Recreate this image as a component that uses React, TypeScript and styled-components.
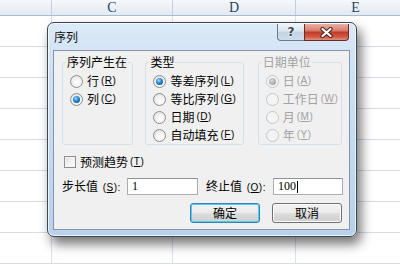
import styled, { createGlobalStyle } from 'styled-components'

const Global = createGlobalStyle`
	html, body {
		margin: 0;
		padding: 0;
	}
	body {
		width: 400px;
		height: 266px;
		overflow: hidden;
		background: #fff;
		font-family: "Noto Sans CJK SC", "DejaVu Sans", sans-serif;
	}
`

const columns = [
	{ w: 52, label: '' },
	{ w: 121, label: 'C' },
	{ w: 123, label: 'D' },
	{ w: 120, label: 'E' },
]

const App = () => {
	return (
		<>
			<Global />
			<Sheet>
				<HeaderRow>
					{columns.map((c, i) => (
						<ColHead key={i} $w={c.w}>
							{c.label}
						</ColHead>
					))}
				</HeaderRow>
				{Array.from({ length: 8 }).map((_, r) => (
					<GridRow key={r}>
						{columns.map((c, i) => (
							<Cell key={i} $w={c.w} />
						))}
					</GridRow>
				))}

				<Dialog>
					<TitleBar>
						<Title>序列</Title>
						<CaptionButtons>
							<HelpButton>?</HelpButton>
							<CloseButton>
								<svg width="13" height="11" viewBox="0 0 13 11">
									<path d="M2.5 2 L10.5 9 M10.5 2 L2.5 9" stroke="#4a2320" strokeWidth="4.2" strokeLinecap="round" />
									<path d="M2.5 2 L10.5 9 M10.5 2 L2.5 9" stroke="#fff" strokeWidth="2.2" strokeLinecap="round" />
								</svg>
							</CloseButton>
						</CaptionButtons>
					</TitleBar>

					<Client>
						<Groups>
							<Group $w={72}>
								<Legend>序列产生在</Legend>
								<RadioList>
									<Option>
										<Radio />
										行 <Key>(<u>R</u>)</Key>
									</Option>
									<Option>
										<Radio $checked />
										列 <Key>(<u>C</u>)</Key>
									</Option>
								</RadioList>
							</Group>
							<Group $w={99}>
								<Legend>类型</Legend>
								<RadioList>
									<Option>
										<Radio $checked />
										等差序列 <Key>(<u>L</u>)</Key>
									</Option>
									<Option>
										<Radio />
										等比序列 <Key>(<u>G</u>)</Key>
									</Option>
									<Option>
										<Radio />
										日期 <Key>(<u>D</u>)</Key>
									</Option>
									<Option>
										<Radio />
										自动填充 <Key>(<u>F</u>)</Key>
									</Option>
								</RadioList>
							</Group>
							<Group $w={85} $disabled>
								<Legend>日期单位</Legend>
								<RadioList>
									<Option>
										<Radio $checked $disabled />
										日 <Key>(<u>A</u>)</Key>
									</Option>
									<Option>
										<Radio $disabled />
										工作日 <Key>(<u>W</u>)</Key>
									</Option>
									<Option>
										<Radio $disabled />
										月 <Key>(<u>M</u>)</Key>
									</Option>
									<Option>
										<Radio $disabled />
										年 <Key>(<u>Y</u>)</Key>
									</Option>
								</RadioList>
							</Group>
						</Groups>

						<CheckRow>
							<Checkbox />
							预测趋势 <Key>(<u>T</u>)</Key>
						</CheckRow>

						<Fields>
							<FieldLabel>
								步长值 <Key>(<u>S</u>):</Key>
							</FieldLabel>
							<TextBox>1</TextBox>
							<FieldLabel $indent>
								终止值 <Key>(<u>O</u>):</Key>
							</FieldLabel>
							<TextBox>
								100
								<Caret />
							</TextBox>
						</Fields>

						<Buttons>
							<PushButton $default>确定</PushButton>
							<PushButton>取消</PushButton>
						</Buttons>
					</Client>
				</Dialog>
			</Sheet>
		</>
	)
}

const Sheet = styled.div`
	position: relative;
	width: 400px;
	height: 266px;
	overflow: hidden;
	background: #fff;
`

const HeaderRow = styled.div`
	display: flex;
	height: 16px;
	box-sizing: border-box;
	background: linear-gradient(#f5f8fc, #e3e9f2);
	border-bottom: 1px solid #a9bdd3;
`

const ColHead = styled.div<{ $w: number }>`
	flex: 0 0 ${(p) => p.$w}px;
	box-sizing: border-box;
	border-right: 1px solid #c3cfdd;
	display: flex;
	justify-content: center;
	align-items: center;
	overflow: hidden;
	font-family: "Liberation Serif", serif;
	font-size: 14px;
	line-height: 15px;
	color: #2b4266;
`

const GridRow = styled.div`
	display: flex;
	height: 31px;
`

const Cell = styled.div<{ $w: number }>`
	flex: 0 0 ${(p) => p.$w}px;
	box-sizing: border-box;
	border-right: 1px solid #dce2ec;
	border-bottom: 1px solid #d6dce8;
`

const Dialog = styled.div`
	position: absolute;
	left: 47px;
	top: 22px;
	width: 310px;
	height: 215px;
	box-sizing: border-box;
	display: flex;
	flex-direction: column;
	border: 1px solid #3b4654;
	border-radius: 7px;
	background: linear-gradient(180deg, #dceaf8 0%, #cfe1f4 20%, #c3d9f0 60%, #b8d1ec 100%);
	box-shadow: inset 0 0 0 1px rgba(255, 255, 255, 0.7), 4px 7px 12px rgba(0, 0, 0, 0.55);
`

const TitleBar = styled.div`
	height: 27px;
	display: flex;
	justify-content: space-between;
	align-items: flex-start;
`

const Title = styled.div`
	margin: 7px 0 0 6px;
	font-size: 12px;
	line-height: 14px;
	color: #111;
`

const CaptionButtons = styled.div`
	display: flex;
	margin: 1px 7px 0 0;
	height: 17px;
`

const HelpButton = styled.div`
	width: 27px;
	box-sizing: border-box;
	border: 1px solid #6c7a8c;
	border-right: none;
	border-top: none;
	border-radius: 0 0 0 4px;
	background: linear-gradient(180deg, #eef3f8 0%, #dce5ef 45%, #c5d3e2 50%, #cfdceb 100%);
	display: flex;
	justify-content: center;
	align-items: center;
	font-family: "DejaVu Sans", sans-serif;
	font-weight: bold;
	font-size: 12px;
	color: #3a4657;
	text-shadow: 0 0 2px #fff, 0 0 1px #fff;
`

const CloseButton = styled.div`
	width: 45px;
	box-sizing: border-box;
	border: 1px solid #6a2d26;
	border-top: none;
	border-radius: 0 0 4px 0;
	background: linear-gradient(180deg, #eab0a4 0%, #d9806f 40%, #c23b2b 52%, #cf5a47 80%, #e3907f 100%);
	display: flex;
	justify-content: center;
	align-items: center;
`

const Client = styled.div`
	flex: 1;
	margin: 0 6px 6px 5px;
	border: 1px solid #8596ab;
	background: #f0f0f0;
	padding: 4px 7px 0 8px;
	display: flex;
	flex-direction: column;
	font-size: 12px;
	color: #000;
`

const Groups = styled.div`
	display: flex;
	gap: 12px;
`

const Group = styled.fieldset<{ $w: number; $disabled?: boolean }>`
	margin: 0;
	padding: 0 0 0 7px;
	width: ${(p) => p.$w}px;
	min-width: 0;
	height: 90px;
	box-sizing: border-box;
	border: 1px solid #d5dfe5;
	border-radius: 3px;
	color: ${(p) => (p.$disabled ? '#a2a2a2' : '#000')};

	&:last-child {
		margin-left: 2px;
	}
`

const Legend = styled.legend`
	margin-left: -4px;
	padding: 0 1px;
	font-size: 12px;
	line-height: 14px;
`

const RadioList = styled.div`
	padding-top: 3px;
	display: flex;
	flex-direction: column;
`

const Option = styled.div`
	display: flex;
	align-items: center;
	height: 18px;
	white-space: nowrap;
	font-size: 12px;
	line-height: 14px;
`

const Key = styled.span`
	margin-left: 2px;
	font-family: "Liberation Sans", sans-serif;
	font-size: 10px;
	letter-spacing: 0.5px;
`

const Radio = styled.span<{ $checked?: boolean; $disabled?: boolean }>`
	position: relative;
	flex: 0 0 auto;
	width: 11px;
	height: 11px;
	margin-right: 4px;
	border-radius: 50%;
	border: 1px solid ${(p) => (p.$disabled ? '#c6c6c6' : '#8a8d90')};
	background: ${(p) =>
		p.$disabled ? '#f4f4f4' : 'radial-gradient(circle at 60% 65%, #ffffff 0%, #f0f0f0 50%, #d8d8d8 100%)'};

	&::after {
		content: '';
		display: ${(p) => (p.$checked ? 'block' : 'none')};
		position: absolute;
		left: 2px;
		top: 2px;
		width: 7px;
		height: 7px;
		border-radius: 50%;
		background: ${(p) =>
			p.$disabled
				? 'radial-gradient(circle at 40% 35%, #d8d8d8 0%, #a6a6a6 70%)'
				: 'radial-gradient(circle at 40% 35%, #9fe0ff 0%, #2a8fd3 40%, #0b4a83 90%)'};
	}
`

const CheckRow = styled.div`
	display: flex;
	align-items: center;
	height: 18px;
	margin-top: 8px;
	padding-left: 2px;
	font-size: 12px;
	line-height: 14px;
`

const Checkbox = styled.span`
	width: 10px;
	height: 10px;
	margin-right: 4px;
	border: 1px solid #8e8f8f;
	background: linear-gradient(135deg, #dcdcdc 0%, #f2f2f2 50%, #ffffff 100%);
	box-shadow: inset 0 0 0 1px #f4f4f4;
`

const Fields = styled.div`
	display: grid;
	grid-template-columns: 65px 71px 75px 70px;
	align-items: center;
	margin-top: 7px;
	height: 17px;
`

const FieldLabel = styled.div<{ $indent?: boolean }>`
	padding-left: ${(p) => (p.$indent ? 8 : 0)}px;
	white-space: nowrap;
	font-size: 12px;
	line-height: 14px;
`

const TextBox = styled.div`
	height: 17px;
	box-sizing: border-box;
	border: 1px solid #abadb3;
	border-top-color: #8f9298;
	background: #fff;
	padding: 0 4px;
	display: flex;
	align-items: center;
	font-family: "Liberation Serif", serif;
	font-size: 12px;
	color: #000;
`

const Caret = styled.span`
	display: inline-block;
	width: 1px;
	height: 12px;
	margin-left: 1px;
	background: #000;
`

const Buttons = styled.div`
	display: flex;
	justify-content: flex-end;
	gap: 12px;
	margin-top: 8px;
	padding-right: 0;
`

const PushButton = styled.div<{ $default?: boolean }>`
	width: 70px;
	height: 20px;
	box-sizing: border-box;
	border: 1px solid ${(p) => (p.$default ? '#3c7fb1' : '#707070')};
	border-radius: 3px;
	background: linear-gradient(180deg, #f2f2f2 0%, #ebebeb 48%, #dddddd 52%, #cfcfcf 100%);
	box-shadow: ${(p) => (p.$default ? 'inset 0 0 0 1px #48d0f9' : 'inset 0 0 0 1px #fcfcfc')};
	display: flex;
	justify-content: center;
	align-items: center;
	font-size: 12px;
	line-height: 14px;
	color: #000;
`

export default App
